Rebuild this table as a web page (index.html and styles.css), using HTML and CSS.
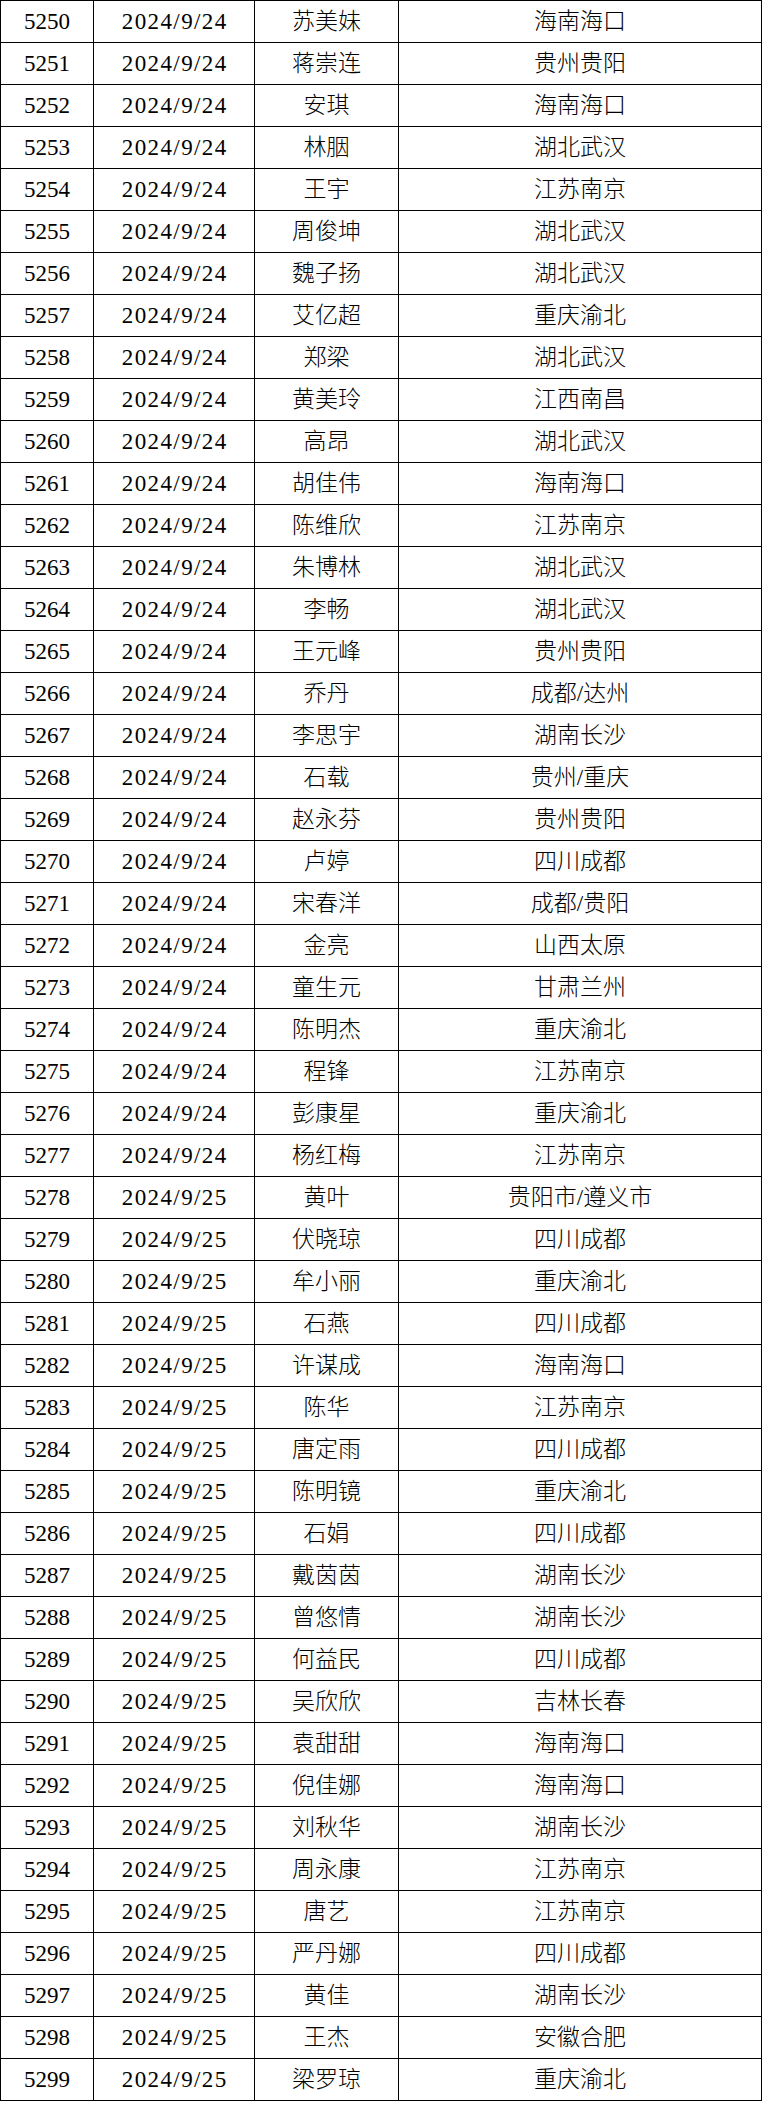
FILE: index.html
```html
<!DOCTYPE html>
<html lang="zh-CN">
<head>
<meta charset="utf-8">
<title>名单</title>
<link rel="stylesheet" href="styles.css">
</head>
<body>
<table class="roster">
<colgroup><col class="c-id"><col class="c-date"><col class="c-name"><col class="c-place"></colgroup>
<tbody>
<tr><td>5250</td><td>2024/9/24</td><td>苏美妹</td><td>海南海口</td></tr>
<tr><td>5251</td><td>2024/9/24</td><td>蒋崇连</td><td>贵州贵阳</td></tr>
<tr><td>5252</td><td>2024/9/24</td><td>安琪</td><td>海南海口</td></tr>
<tr><td>5253</td><td>2024/9/24</td><td>林胭</td><td>湖北武汉</td></tr>
<tr><td>5254</td><td>2024/9/24</td><td>王宇</td><td>江苏南京</td></tr>
<tr><td>5255</td><td>2024/9/24</td><td>周俊坤</td><td>湖北武汉</td></tr>
<tr><td>5256</td><td>2024/9/24</td><td>魏子扬</td><td>湖北武汉</td></tr>
<tr><td>5257</td><td>2024/9/24</td><td>艾亿超</td><td>重庆渝北</td></tr>
<tr><td>5258</td><td>2024/9/24</td><td>郑梁</td><td>湖北武汉</td></tr>
<tr><td>5259</td><td>2024/9/24</td><td>黄美玲</td><td>江西南昌</td></tr>
<tr><td>5260</td><td>2024/9/24</td><td>高昂</td><td>湖北武汉</td></tr>
<tr><td>5261</td><td>2024/9/24</td><td>胡佳伟</td><td>海南海口</td></tr>
<tr><td>5262</td><td>2024/9/24</td><td>陈维欣</td><td>江苏南京</td></tr>
<tr><td>5263</td><td>2024/9/24</td><td>朱博林</td><td>湖北武汉</td></tr>
<tr><td>5264</td><td>2024/9/24</td><td>李畅</td><td>湖北武汉</td></tr>
<tr><td>5265</td><td>2024/9/24</td><td>王元峰</td><td>贵州贵阳</td></tr>
<tr><td>5266</td><td>2024/9/24</td><td>乔丹</td><td>成都/达州</td></tr>
<tr><td>5267</td><td>2024/9/24</td><td>李思宇</td><td>湖南长沙</td></tr>
<tr><td>5268</td><td>2024/9/24</td><td>石载</td><td>贵州/重庆</td></tr>
<tr><td>5269</td><td>2024/9/24</td><td>赵永芬</td><td>贵州贵阳</td></tr>
<tr><td>5270</td><td>2024/9/24</td><td>卢婷</td><td>四川成都</td></tr>
<tr><td>5271</td><td>2024/9/24</td><td>宋春洋</td><td>成都/贵阳</td></tr>
<tr><td>5272</td><td>2024/9/24</td><td>金亮</td><td>山西太原</td></tr>
<tr><td>5273</td><td>2024/9/24</td><td>童生元</td><td>甘肃兰州</td></tr>
<tr><td>5274</td><td>2024/9/24</td><td>陈明杰</td><td>重庆渝北</td></tr>
<tr><td>5275</td><td>2024/9/24</td><td>程锋</td><td>江苏南京</td></tr>
<tr><td>5276</td><td>2024/9/24</td><td>彭康星</td><td>重庆渝北</td></tr>
<tr><td>5277</td><td>2024/9/24</td><td>杨红梅</td><td>江苏南京</td></tr>
<tr><td>5278</td><td>2024/9/25</td><td>黄叶</td><td>贵阳市/遵义市</td></tr>
<tr><td>5279</td><td>2024/9/25</td><td>伏晓琼</td><td>四川成都</td></tr>
<tr><td>5280</td><td>2024/9/25</td><td>牟小丽</td><td>重庆渝北</td></tr>
<tr><td>5281</td><td>2024/9/25</td><td>石燕</td><td>四川成都</td></tr>
<tr><td>5282</td><td>2024/9/25</td><td>许谋成</td><td>海南海口</td></tr>
<tr><td>5283</td><td>2024/9/25</td><td>陈华</td><td>江苏南京</td></tr>
<tr><td>5284</td><td>2024/9/25</td><td>唐定雨</td><td>四川成都</td></tr>
<tr><td>5285</td><td>2024/9/25</td><td>陈明镜</td><td>重庆渝北</td></tr>
<tr><td>5286</td><td>2024/9/25</td><td>石娟</td><td>四川成都</td></tr>
<tr><td>5287</td><td>2024/9/25</td><td>戴茵茵</td><td>湖南长沙</td></tr>
<tr><td>5288</td><td>2024/9/25</td><td>曾悠情</td><td>湖南长沙</td></tr>
<tr><td>5289</td><td>2024/9/25</td><td>何益民</td><td>四川成都</td></tr>
<tr><td>5290</td><td>2024/9/25</td><td>吴欣欣</td><td>吉林长春</td></tr>
<tr><td>5291</td><td>2024/9/25</td><td>袁甜甜</td><td>海南海口</td></tr>
<tr><td>5292</td><td>2024/9/25</td><td>倪佳娜</td><td>海南海口</td></tr>
<tr><td>5293</td><td>2024/9/25</td><td>刘秋华</td><td>湖南长沙</td></tr>
<tr><td>5294</td><td>2024/9/25</td><td>周永康</td><td>江苏南京</td></tr>
<tr><td>5295</td><td>2024/9/25</td><td>唐艺</td><td>江苏南京</td></tr>
<tr><td>5296</td><td>2024/9/25</td><td>严丹娜</td><td>四川成都</td></tr>
<tr><td>5297</td><td>2024/9/25</td><td>黄佳</td><td>湖南长沙</td></tr>
<tr><td>5298</td><td>2024/9/25</td><td>王杰</td><td>安徽合肥</td></tr>
<tr><td>5299</td><td>2024/9/25</td><td>梁罗琼</td><td>重庆渝北</td></tr>
</tbody>
</table>
</body>
</html>
```
FILE: styles.css
```css
html, body {
  margin: 0;
  padding: 0;
  background: #ffffff;
}

.roster {
  border-collapse: collapse;
  table-layout: fixed;
  width: 761px;
  font-family: "Liberation Serif", "Noto Sans CJK SC", serif;
  font-size: 23px;
  font-weight: 300;
  color: #000000;
}

.c-id { width: 93px; }
.c-date { width: 161px; }
.c-name { width: 144px; }
.c-place { width: 363px; }

.roster td {
  border: 1px solid #000000;
  height: 41px;
  padding: 0;
  text-align: center;
  vertical-align: middle;
  line-height: 1;
  white-space: nowrap;
}

.roster td:nth-child(2) {
  letter-spacing: 1.4px;
  text-indent: 1.4px;
}
```
